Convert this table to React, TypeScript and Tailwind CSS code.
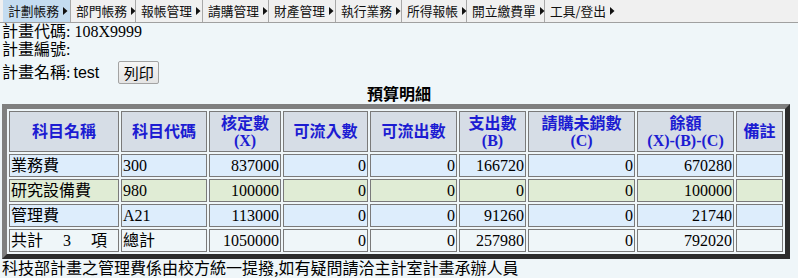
import React from "react";

const menu = [
  { t: "計劃帳務", w: "w-[68px]", active: true },
  { t: "部門帳務", w: "w-[65px]" },
  { t: "報帳管理", w: "w-[67px]" },
  { t: "請購管理", w: "w-[66px]" },
  { t: "財產管理", w: "w-[67px]" },
  { t: "執行業務", w: "w-[66px]" },
  { t: "所得報帳", w: "w-[65px]" },
  { t: "開立繳費單", w: "w-[78px]" },
  { t: "工具/登出", w: "w-[72px]", last: true },
];

const cols = [110, 86, 72, 85, 87, 67, 107, 97, 47];

const rows = [
  { bg: "bg-[#ddedfc]", c: ["業務費", "300", "837000", "0", "0", "166720", "0", "670280", ""] },
  { bg: "bg-[#e0ecd5]", c: ["研究設備費", "980", "100000", "0", "0", "0", "0", "100000", ""] },
  { bg: "bg-[#ddedfc]", c: ["管理費", "A21", "113000", "0", "0", "91260", "0", "21740", ""] },
  { bg: "bg-[#eff6f9]", c: ["共計\u3000 3 \u3000項", "總計", "1050000", "0", "0", "257980", "0", "792020", ""] },
];

function Arrow() {
  return (
    <svg width="5" height="8" viewBox="0 0 5 8" className="shrink-0 ml-[4px]">
      <path d="M0 0 L4.5 4 L0 8 Z" fill="#111" />
    </svg>
  );
}

const serif = { fontFamily: '"Liberation Serif", "Noto Sans CJK TC", serif' };

export default function App() {
  return (
    <div className="w-[798px] h-[278px] bg-[#eff6f9] text-black overflow-hidden" style={serif}>
      <div
        className="flex h-[23px] bg-[#f0f0f0] border-b border-[#a0a0a0] pl-[3px] text-[12.75px] leading-[22px] text-[#111] whitespace-nowrap"
        style={{ fontFamily: '"Noto Sans CJK TC", sans-serif' }}
      >
        {menu.map((m) => (
          <div
            key={m.t}
            className={`${m.w} shrink-0 flex items-center pl-[5px] pr-[3px] ${m.last ? "" : "border-r border-[#a8a8a8]"} ${m.active ? "bg-[#c4dcf0]" : ""}`}
          >
            <span>{m.t}</span>
            <Arrow />
          </div>
        ))}
      </div>

      <div className="pl-[2px] text-[16px] leading-[18px]">
        <div>計畫代碼: 108X9999</div>
        <div>計畫編號:</div>
        <div className="flex items-center h-[27px]">
          <span>計畫名稱: </span>
          <span className="ml-[3px]" style={{ fontFamily: '"Liberation Sans", sans-serif' }}>test</span>
          <button
            className="ml-[19px] w-[41px] h-[23px] border border-[#a3a3a3] rounded-[2px] bg-gradient-to-b from-[#f6f6f6] to-[#e4e4e4] text-[15px] leading-[20px]"
            style={{ fontFamily: '"Noto Sans CJK TC", sans-serif' }}
          >
            列印
          </button>
        </div>
      </div>

      <div className="text-center font-bold text-[16px] leading-[18px] h-[18px]">預算明細</div>

      <table
        className="ml-[2px] w-[788px] table-fixed border-separate border-spacing-[2px] border-[5px] border-solid border-t-[#7f7f7f] border-l-[#7f7f7f] border-r-[#2c2c2c] border-b-[#2c2c2c] text-[16px]"
      >
        <colgroup>
          {cols.map((w, i) => (
            <col key={i} style={{ width: w }} />
          ))}
        </colgroup>
        <thead>
          <tr>
            {[
              ["科目名稱"],
              ["科目代碼"],
              ["核定數", "(X)"],
              ["可流入數"],
              ["可流出數"],
              ["支出數", "(B)"],
              ["請購未銷數", "(C)"],
              ["餘額", "(X)-(B)-(C)"],
              ["備註"],
            ].map((h, i) => (
              <th
                key={i}
                className="h-[41px] p-0 border border-[#7a7a7a] bg-[#d6dde6] text-[#1c1cd2] font-bold leading-[17px] align-middle"
              >
                {h.map((l, j) => (
                  <div key={j}>{l}</div>
                ))}
              </th>
            ))}
          </tr>
        </thead>
        <tbody>
          {rows.map((r, ri) => (
            <tr key={ri} className={r.bg}>
              {r.c.map((v, ci) => (
                <td
                  key={ci}
                  className={`h-[23px] px-[1px] py-0 border border-[#7a7a7a] leading-[19px] whitespace-pre ${ci >= 2 ? "text-right" : "text-left"}`}
                >
                  {v}
                </td>
              ))}
            </tr>
          ))}
        </tbody>
      </table>

      <div className="pl-[2px] text-[16px] leading-[17px] whitespace-nowrap" style={{ fontFamily: '"Noto Sans CJK TC", sans-serif' }}>
        科技部計畫之管理費係由校方統一提撥,如有疑問請洽主計室計畫承辦人員
      </div>
    </div>
  );
}
